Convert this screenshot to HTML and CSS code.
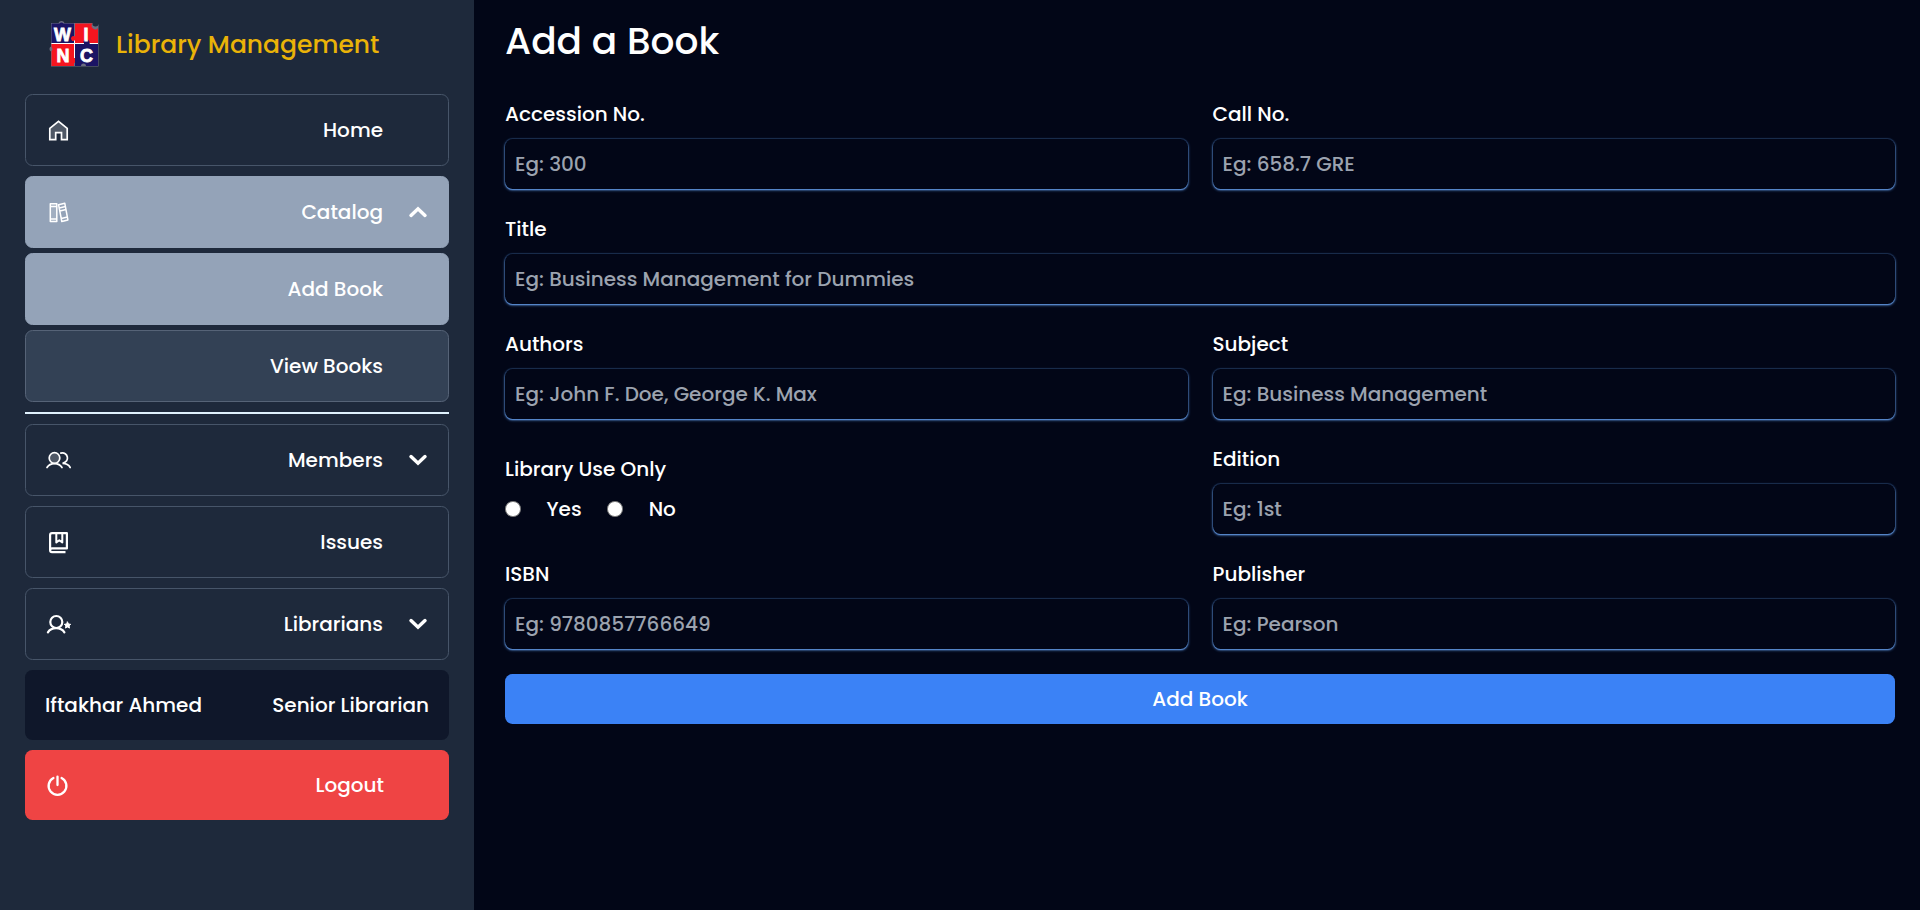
FILE: index.html
```html
<!DOCTYPE html>
<html lang="en">
<head>
<meta charset="utf-8">
<title>Library Management</title>
<link rel="stylesheet" href="styles.css">
</head>
<body>
<div class="app">
  <aside class="sidebar">
    <header class="brand">
      <svg class="logo" viewBox="0 0 50 48" aria-hidden="true">
        <path fill="#c9c4d4" d="M2 3H9.500a3.200 3.200 0 0 1 6 0H43.500a3 3 0 0 0 6 1V46.500H2V31.500a2.800 2.800 0 0 1 0-5z" opacity=".45"/>
        <path fill="#1b1464" d="M2.500 3.500H10.500a2.500 2.500 0 0 1 4 0H25V23H2.500z"/>
        <path fill="#f5151f" d="M26 3.500H43.500a3.500 3.500 0 0 0 5.500 4.500V23H26V20.500a2.500 2.500 0 1 1 0-4z"/>
        <path fill="#f5151f" d="M2.500 24H25V38a2.500 2.500 0 1 1 0 5v3H2.500V31a2.500 2.500 0 0 0 0-4z"/>
        <path fill="#1b1464" d="M26 24H35a3 3 0 1 1 5 0H49V46H37a2.500 2.500 0 0 0-5 0H26z"/>
        <path fill="none" stroke="#fff" stroke-width="1" d="M2.500 23.500H35M41 23.500H49M25.500 20.500V23M25.500 24V38"/>
        <g class="logo-letters">
          <text x="13.500" y="20.600">W</text>
          <text x="37" y="20.600">I</text>
          <text x="14" y="41.900">N</text>
          <text x="37.500" y="41.900">C</text>
        </g>
      </svg>
      <span class="brand-name">Library Management</span>
    </header>

    <nav class="menu">
      <a class="item">
        <svg class="icon" viewBox="0 0 25 25" fill="none" stroke="#fff" stroke-width="1.700"><path fill="#ffffff38" d="M3.800 10.300 12.500 3.300 21.200 10.300V21.700H15.500V14.700H9.700V21.700H3.800z"/></svg>
        <span class="label">Home</span>
      </a>
      <div class="group">
        <a class="item active">
          <svg class="icon" viewBox="0 0 25 25" fill="none" stroke="#fff" stroke-width="1.500" stroke-linejoin="round"><path fill="#ffffff22" d="M4.300 3.800H10.800V21.500H4.300zM4.300 6.500H10.800M4.300 19H10.800"/><path d="M12.600 4.800 18.800 3.300 21.900 20 15.800 21.500zM13.300 7.900 19.400 6.500M13.900 11 20 9.500M15.300 18.500 21.400 17"/></svg>
          <span class="label">Catalog</span>
          <svg class="chevron" viewBox="0 0 20 20"><path d="M3 13.400 10 6.800 17 13.400"/></svg>
        </a>
        <a class="item active"><span class="label">Add Book</span></a>
        <a class="item sub"><span class="label">View Books</span></a>
      </div>
      <hr class="rule">
      <a class="item">
        <svg class="icon" viewBox="0 0 25 25" fill="none" stroke="#fff" stroke-width="1.700" stroke-linecap="round"><circle cx="8.500" cy="10" r="5.300" fill="#ffffff38"/><path d="M1 19.500C4 14.200 13 14.200 16 19.500M14.800 5.100C22 3.300 24.500 13.800 16.500 15.300 20 15.300 22.800 16.800 24.200 19.500"/></svg>
        <span class="label">Members</span>
        <svg class="chevron" viewBox="0 0 20 20"><path d="M3 6.600 10 13.200 17 6.600"/></svg>
      </a>
      <a class="item">
        <svg class="icon" viewBox="0 0 25 25" fill="none" stroke="#fff" stroke-width="2.200" stroke-linejoin="round"><path d="M19.500 22.200H6C4.900 22.200 4.100 21.400 4.100 20.300V5C4.100 3.900 4.900 3.200 6 3.200H20.900V18.400H6C4.900 18.400 4.100 19.200 4.100 20.300"/><path stroke-width="2" d="M10.300 3.500V12.500L13.300 10.200 16.300 12.500V3.500"/></svg>
        <span class="label">Issues</span>
      </a>
      <a class="item">
        <svg class="icon" viewBox="0 0 25 25" fill="none" stroke="#fff" stroke-width="2.200" stroke-linecap="round"><circle cx="10.300" cy="10" r="6"/><path d="M1.900 20.300C5.500 14.800 14.800 14.800 18.400 20.300"/><path fill="#fff" stroke="#fff" stroke-width="1" stroke-linejoin="round" d="M21.500 10 22.500 12 24.700 12.300 23.100 13.900 23.500 16.100 21.500 15 19.500 16.100 19.900 13.900 18.300 12.300 20.500 12z"/></svg>
        <span class="label">Librarians</span>
        <svg class="chevron" viewBox="0 0 20 20"><path d="M3 6.600 10 13.200 17 6.600"/></svg>
      </a>
      <div class="profile">
        <span>Iftakhar Ahmed</span>
        <span>Senior Librarian</span>
      </div>
      <a class="item logout">
        <svg class="icon" viewBox="0 0 25 25" fill="none" stroke="#fff" stroke-width="2.300" stroke-linecap="round"><path d="M12.500 3.600V12M8.400 5A8.900 8.900 0 1 0 16.600 5"/></svg>
        <span class="label">Logout</span>
      </a>
    </nav>
  </aside>

  <main class="content">
    <h1 class="heading">Add a Book</h1>
    <form class="form">
      <label class="field"><span>Accession No.</span><input type="text" placeholder="Eg: 300"></label>
      <label class="field"><span>Call No.</span><input type="text" placeholder="Eg: 658.7 GRE"></label>
      <label class="field wide"><span>Title</span><input type="text" placeholder="Eg: Business Management for Dummies"></label>
      <label class="field"><span>Authors</span><input type="text" placeholder="Eg: John F. Doe, George K. Max"></label>
      <label class="field"><span>Subject</span><input type="text" placeholder="Eg: Business Management"></label>
      <div class="field">
        <span>Library Use Only</span>
        <div class="options">
          <label class="option"><input type="radio" name="use"><span>Yes</span></label>
          <label class="option"><input type="radio" name="use"><span>No</span></label>
        </div>
      </div>
      <label class="field"><span>Edition</span><input type="text" placeholder="Eg: 1st"></label>
      <label class="field"><span>ISBN</span><input type="text" placeholder="Eg: 9780857766649"></label>
      <label class="field"><span>Publisher</span><input type="text" placeholder="Eg: Pearson"></label>
      <button class="submit wide" type="button">Add Book</button>
    </form>
  </main>
</div>
</body>
</html>
```
FILE: styles.css
```css
* { box-sizing: border-box; }

body {
  margin: 0;
  background: #020617;
  color: #fff;
  font: 500 20px/30px Poppins, Inter, sans-serif;
}

.app { display: flex; height: 910px; overflow: hidden; }

/* Sidebar */
.sidebar { width: 474px; flex: none; padding: 0 25px; background: #1e293b; }
.brand { display: flex; align-items: center; height: 94px; padding: 0 0 6px 24px; gap: 17px; }
.logo { width: 50px; height: 48px; flex: none; }
.logo-letters {
  fill: #fff;
  stroke: #fff;
  stroke-width: .8px;
  font: 700 18px "Liberation Sans", sans-serif;
  text-anchor: middle;
}
.brand-name { padding-top: 1px; color: #eab308; font-size: 25px; white-space: nowrap; }

.menu, .group { display: flex; flex-direction: column; }
.menu { gap: 10px; }
.group { gap: 5px; }

.item {
  display: flex;
  align-items: center;
  height: 72px;
  padding: 20px;
  border: 1px solid #475569;
  border-radius: 7.500px;
}
.item.active { background: #94a3b8; border-color: #94a3b8; }
.item.sub { background: #334155; border-color: #566377; }
.icon { width: 25px; height: 25px; flex: none; overflow: visible; }
.label { margin-left: auto; margin-right: 45px; }
.label:has(+ .chevron) { margin-right: 25px; }
.chevron { width: 20px; height: 20px; flex: none; fill: none; stroke: #fff; stroke-width: 3.500; stroke-linecap: round; }
.rule { width: 100%; height: 2px; margin: 0; border: 0; background: #e0f2fe; }

.profile {
  display: flex;
  align-items: center;
  justify-content: space-between;
  height: 70px;
  padding: 0 20px;
  border-radius: 7.500px;
  background: #0f172a;
}
.item.logout { height: 70px; border: 0; background: #ef4444; }

/* Form page */
.content { flex: 1; padding: 0 25px 0 31px; }
.heading { margin: 0; padding: 19px 0 35px; font-size: 37.500px; font-weight: 500; line-height: 45px; }
.form { display: grid; grid-template-columns: 1fr 1fr; gap: 25px; }
.field { display: flex; flex-direction: column; justify-content: center; gap: 10px; min-width: 0; }
.wide { grid-column: 1 / -1; }

.field input[type="text"] {
  width: 100%;
  height: 50px;
  padding: 10px;
  border: 0;
  border-radius: 7.500px;
  background: #020617;
  color: #fff;
  font: inherit;
  box-shadow: 0 1px 3px 0 #5b8fd6, 0 1px 2px -1px #5b8fd6, 0 1px 1px 0 #4a70ac, 0 0 0 1px #60a5fa22;
}
.field input::placeholder { color: #9ca3af; opacity: 1; }

.options { display: flex; align-items: center; gap: 25.500px; }
.option { display: flex; align-items: center; gap: 26px; }
.option input {
  appearance: none;
  width: 15.500px;
  height: 15.500px;
  margin: 0;
  border: 1px solid #767676;
  border-radius: 50%;
  background: #fff;
}

.submit {
  height: 50px;
  padding: 0;
  border: 0;
  border-radius: 7.500px;
  background: #3b82f6;
  color: #fff;
  font: inherit;
}
```
